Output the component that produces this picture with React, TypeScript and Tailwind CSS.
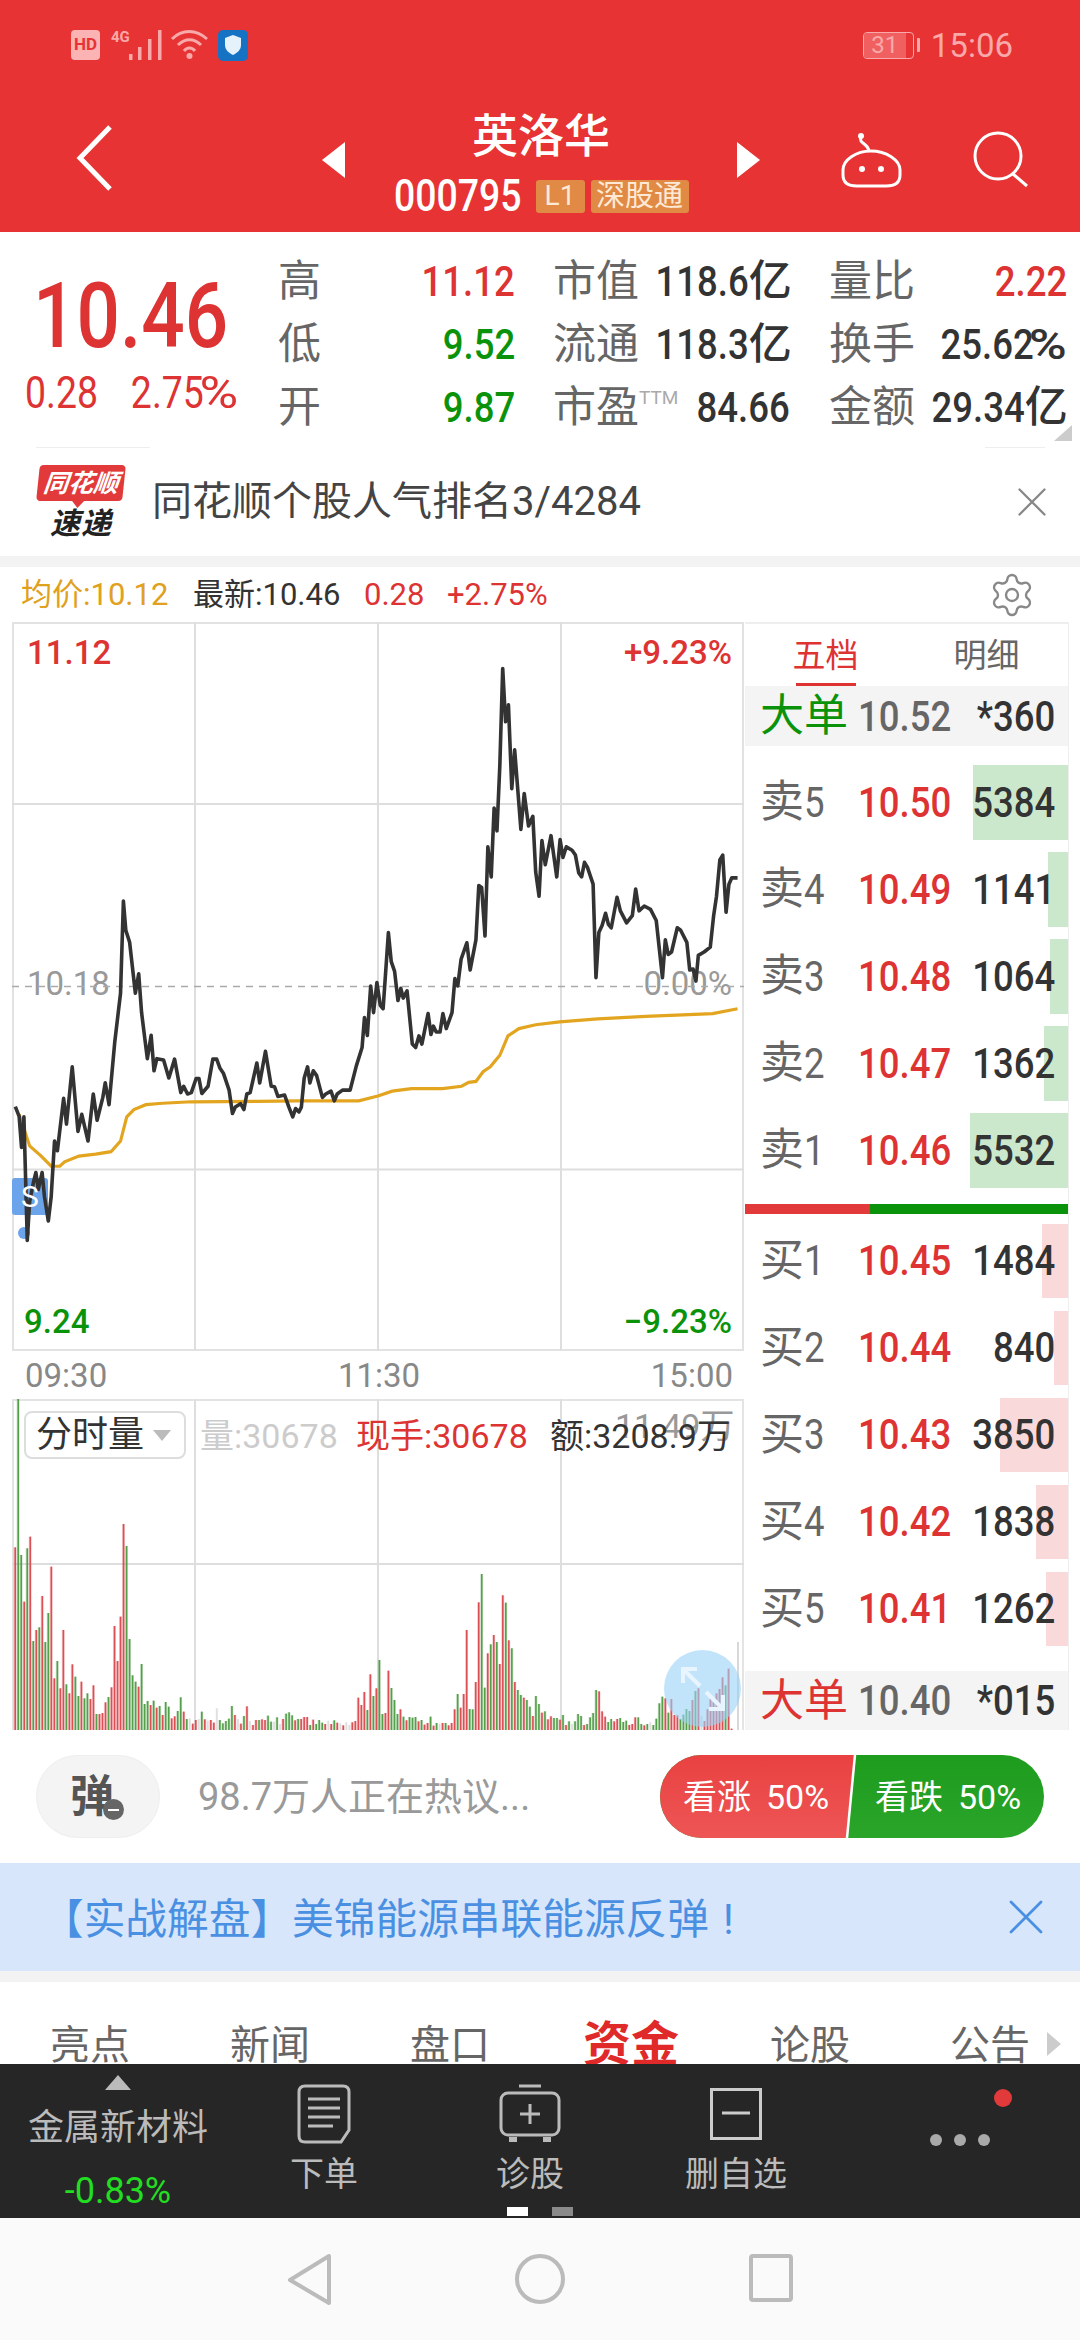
import { Settings, X } from 'lucide-react'

const RED = 'text-[#dd3333]'
const GREEN = 'text-[#0a930a]'

const PRICE_LINE =
  '32,1004 40,1024 45,1088 50,1025 57,1280 62,1200 70,1160 75,1140 80,1175 88,1140 93,1190 101,1240 107,1190 114,1075 120,1095 133,987 139,1040 151,922 163,1055 171,1020 184,1075 195,978 203,1032 215,985 220,955 228,1000 240,870 252,770 258,580 263,640 271,665 283,770 290,730 296,810 308,905 316,857 322,930 328,905 342,908 353,945 365,906 378,975 384,962 392,978 400,975 410,946 416,946 422,977 435,962 445,906 453,906 460,925 467,935 479,970 486,1018 492,1005 503,998 510,1010 516,978 523,975 537,914 543,955 555,890 567,962 574,963 581,983 595,980 604,1005 612,1025 618,1008 625,1015 630,1005 636,945 643,922 648,955 655,930 662,940 674,985 681,978 692,972 699,992 705,978 716,970 732,970 745,920 757,882 762,820 768,857 775,755 781,810 788,748 795,795 801,802 812,645 818,705 825,725 832,785 838,760 843,780 851,765 862,875 869,882 876,858 882,875 895,812 901,855 906,838 912,850 920,850 926,812 933,843 945,810 951,740 957,755 964,700 976,666 983,722 995,660 1001,548 1007,552 1014,652 1020,468 1027,530 1033,388 1039,435 1045,300 1051,100 1057,210 1063,175 1070,348 1076,268 1089,432 1096,358 1105,425 1114,405 1120,520 1127,570 1133,455 1140,505 1152,445 1164,530 1171,453 1177,490 1184,468 1196,475 1203,485 1210,522 1216,530 1222,500 1228,510 1240,545 1246,738 1252,645 1259,630 1266,605 1272,628 1278,635 1290,572 1297,600 1310,625 1322,610 1329,555 1336,600 1347,590 1360,597 1372,620 1385,738 1391,660 1397,690 1404,685 1416,635 1423,640 1436,665 1442,722 1449,720 1455,745 1460,692 1472,685 1485,675 1492,610 1498,570 1505,495 1511,485 1518,603 1524,545 1530,532 1542,532'

const AVG_LINE =
  '40,1020 62,1085 85,1105 107,1127 125,1127 135,1118 165,1106 200,1102 232,1097 252,1075 265,1025 280,1010 305,1000 340,997 400,994 540,993 620,992 750,992 790,982 820,972 860,967 925,967 965,962 980,954 995,952 1010,932 1025,922 1045,898 1062,858 1085,843 1120,835 1170,829 1250,823 1350,818 1490,812 1542,802'

// bar tops, read off the reference: colour letter + top in 3x crop units (baseline 600)
const VOLUME =
  'r52 g-393 g75 r215 g55 r20 g333 r300 g292 r198 g336 g249 r110 r445 g393 r475 r300 g463 r490 r403 g440 g498 r455 g505 g490 r507 r466 g552 r552 r549 r517 g501 r472 r288 r393 r260 r-18 g48 g327 g436 g455 r470 g402 g522 g513 r525 g512 r533 g528 r555 g516 g530 r565 r559 g543 g502 r545 g567 l565 r581 r570 l567 g545 r568 l572 r570 r578 l535 g570 g580 g573 g566 g528 r555 l567 r581 g558 r529 l573 r585 r570 g570 r568 r570 g557 g575 l575 g562 l582 r567 g551 g547 g556 r571 g567 r567 r561 r561 g585 r569 g582 g570 g578 r582 l572 r582 g571 r578 l580 r586 l577 l585 r577 r573 r503 r525 r486 g540 r433 g498 r475 g390 g552 r549 r422 g474 g510 g552 r538 g560 r571 g561 g563 g561 r574 g570 r584 r579 g560 r587 g579 l581 r579 g579 r586 r579 r538 g492 r533 r492 r300 g537 g538 r456 r217 g132 g473 r370 g343 r315 g336 r402 r196 g218 r331 g355 r456 g480 g495 r503 g510 g530 r558 g498 g522 r548 g544 r568 r559 g564 g564 r569 g555 r585 g574 l582 g574 g552 g558 r585 g582 g562 g549 g480 r484 r544 r560 g576 g567 r574 r567 g564 g576 g572 r585 r582 r562 g562 g582 r586 g582 l577 g585 g566 g520 g500 r505 g548 r507 r555 r556 g567 g554 g537 g543 r510 g483 r475 l558 r573 r538 r507 r515 r490 r477 r442 g466 r416 r596'

const BAR_FILL: Record<string, string> = { r: '#dc4f55', g: '#549f4a', l: '#dedede' }

const SELLS = [
  { n: 5, price: '10.50', vol: '5384', w: 95 },
  { n: 4, price: '10.49', vol: '1141', w: 20 },
  { n: 3, price: '10.48', vol: '1064', w: 18 },
  { n: 2, price: '10.47', vol: '1362', w: 24 },
  { n: 1, price: '10.46', vol: '5532', w: 98 },
]

const BUYS = [
  { n: 1, price: '10.45', vol: '1484', w: 26 },
  { n: 2, price: '10.44', vol: '840', w: 14 },
  { n: 3, price: '10.43', vol: '3850', w: 68 },
  { n: 4, price: '10.42', vol: '1838', w: 32 },
  { n: 5, price: '10.41', vol: '1262', w: 22 },
]

function NumL({ children, className = '' }: { children: React.ReactNode; className?: string }) {
  return <span className={`inline-block origin-left scale-x-[.85] ${className}`}>{children}</span>
}

function NumR({ children, className = '' }: { children: React.ReactNode; className?: string }) {
  return <span className={`inline-block origin-right scale-x-[.85] ${className}`}>{children}</span>
}

function Percent() {
  return <span className="ml-[2px] inline-block origin-right scale-x-[1.2]">%</span>
}

function StatusBar() {
  return (
    <div className="flex h-[90px] items-center justify-between pl-[71px] pr-[67px] text-[#f9a9a9]">
      <div className="flex items-center">
        <div className="flex h-[30px] w-[29px] items-center justify-center rounded-[4px] bg-[#fbb3b3] text-[17px] font-bold text-[#e73333]">
          HD
        </div>
        <svg width="54" height="32" viewBox="0 0 54 32" className="ml-[9px]">
          <text x="2" y="13" fontSize="15" fontWeight="700" fill="#f9a9a9">4G</text>
          <g fill="#f9a9a9">
            <rect x="20" y="25" width="3.5" height="6" />
            <rect x="29" y="18" width="3.5" height="13" />
            <rect x="39" y="10" width="3.5" height="21" />
            <rect x="49" y="1" width="3.5" height="30" />
          </g>
        </svg>
        <svg width="40" height="32" viewBox="0 0 40 32" className="ml-[7px]" fill="none" stroke="#f9a9a9" strokeWidth="3">
          <path d="M2 10 C12 0 26 0 37 10" />
          <path d="M8 16 C15 9 24 9 31 16" />
          <path d="M14 22 C17 18 22 18 25 22" />
          <circle cx="19.5" cy="27" r="3" fill="#f9a9a9" stroke="none" />
        </svg>
        <div className="ml-[8px] flex h-[31px] w-[30px] items-center justify-center rounded-[5px] bg-[#1673c4]">
          <svg width="18" height="22" viewBox="0 0 18 22">
            <path d="M9 1 L17 4 V11 C17 16 13 19 9 21 C5 19 1 16 1 11 V4 Z" fill="#e6f2fb" />
          </svg>
        </div>
      </div>
      <div className="flex items-center">
        <div className="flex h-[27px] w-[51px] items-center overflow-hidden rounded-[4px] border-[1.5px] border-[#f9a9a9] text-[24px] leading-none">
          <div className="flex h-full w-[42px] items-center justify-center bg-[#f06060]">31</div>
        </div>
        <div className="ml-[3px] h-[14px] w-[3px] rounded-r-[1px] bg-[#f9a9a9]" />
        <span className="ml-[11px] text-[33px] leading-none">15:06</span>
      </div>
    </div>
  )
}

function NavBar() {
  return (
    <div className="flex h-[142px] items-start text-white">
      <svg width="50" height="70" viewBox="0 0 50 70" className="ml-[70px] mt-[33px]" fill="none" stroke="#fff" strokeWidth="5">
        <path d="M40 4 L10 35 L40 66" />
      </svg>
      <svg width="24" height="36" viewBox="0 0 24 36" className="ml-[202px] mt-[52px]">
        <path d="M23 0 V36 L0 18 Z" fill="#fff" />
      </svg>
      <div className="flex w-[390px] flex-col items-center">
        <div className="mt-[22px] h-[48px] text-[46px] font-medium leading-[48px]">英洛华</div>
        <div className="mt-[19px] flex h-[34px] items-center">
          <NumL className="w-[142px] text-[44px] font-medium leading-none">000795</NumL>
          <span className="flex h-[33px] w-[49px] items-center justify-center rounded-[3px] bg-[#e08a45] text-[28px] leading-none text-[#fde9d6]">
            L1
          </span>
          <span className="ml-[6px] flex h-[33px] w-[98px] items-center justify-center rounded-[3px] bg-[#e08a45] text-[29px] leading-none text-[#fde9d6]">
            深股通
          </span>
        </div>
      </div>
      <svg width="24" height="36" viewBox="0 0 24 36" className="mt-[52px]">
        <path d="M1 0 V36 L24 18 Z" fill="#fff" />
      </svg>
      <svg width="64" height="58" viewBox="0 0 64 58" className="ml-[80px] mt-[42px]" fill="none" stroke="#fff" strokeWidth="3">
        <circle cx="21" cy="4" r="3" fill="#fff" stroke="none" />
        <path d="M21 5 C18 12 29 11 29 20" />
        <path d="M3 38 C3 28 16 19 31 19 C46 19 60 28 60 38 V43 C60 52 53 54 46 54 H17 C10 54 3 52 3 43 Z" />
        <circle cx="22" cy="37" r="3" fill="#fff" stroke="none" />
        <circle cx="41" cy="37" r="3" fill="#fff" stroke="none" />
      </svg>
      <svg width="60" height="60" viewBox="0 0 60 60" className="ml-[68px] mt-[41px]" fill="none" stroke="#fff" strokeWidth="3">
        <circle cx="26" cy="25" r="23" />
        <path d="M41 43 L55 55" />
      </svg>
    </div>
  )
}

function StatRow({ label, value }: { label: React.ReactNode; value: React.ReactNode }) {
  return (
    <div className="flex h-[63px] items-center justify-between">
      <span className="flex shrink-0 items-start whitespace-nowrap text-[43px] leading-none text-[#666]">{label}</span>
      <span className="flex items-center whitespace-nowrap text-[43px] font-medium leading-none text-[#333]">{value}</span>
    </div>
  )
}

function Stats() {
  return (
    <div className="relative flex h-[216px] bg-white">
      <div className="w-[278px] pl-[25px] pt-[49px]">
        <NumL className={`ml-[8px] block text-[90px] font-medium leading-[72px] ${RED}`}>10.46</NumL>
        <div className={`mt-[20px] flex w-[213px] items-center justify-between text-[44px] leading-[38px] ${RED}`}>
          <NumL>0.28</NumL>
          <span className="flex items-center">
            <NumR>2.75</NumR>
            <Percent />
          </span>
        </div>
      </div>
      <div className="w-[237px] pt-[18px]">
        <StatRow label="高" value={<NumR className={RED}>11.12</NumR>} />
        <StatRow label="低" value={<NumR className={GREEN}>9.52</NumR>} />
        <StatRow label="开" value={<NumR className={GREEN}>9.87</NumR>} />
      </div>
      <div className="ml-[38px] w-[237px] pt-[18px]">
        <StatRow
          label="市值"
          value={
            <>
              <NumR>118.6</NumR>亿
            </>
          }
        />
        <StatRow
          label="流通"
          value={
            <>
              <NumR>118.3</NumR>亿
            </>
          }
        />
        <StatRow
          label={
            <>
              市盈<span className="mt-[2px] text-[19px] leading-none text-[#aaa]">TTM</span>
            </>
          }
          value={<NumR>84.66</NumR>}
        />
      </div>
      <div className="ml-[39px] w-[238px] pt-[18px]">
        <StatRow label="量比" value={<NumR className={RED}>2.22</NumR>} />
        <StatRow
          label="换手"
          value={
            <>
              <NumR>25.62</NumR>
              <Percent />
            </>
          }
        />
        <StatRow
          label="金额"
          value={
            <>
              <NumR>29.34</NumR>亿
            </>
          }
        />
      </div>
      <svg width="18" height="16" viewBox="0 0 18 16" className="absolute right-[8px] top-[193px]">
        <path d="M18 0 V16 H0 Z" fill="#ccc" />
      </svg>
      <span className="absolute bottom-0 left-[36px] h-px w-[114px] bg-[#eee]" />
      <span className="absolute bottom-0 left-[985px] h-px w-[60px] bg-[#eee]" />
    </div>
  )
}

function SpeedLogo() {
  return (
    <div className="flex w-[90px] flex-col items-center">
      <div className="relative flex h-[36px] w-[86px] -skew-x-6 items-center justify-center rounded-[4px] bg-[#e23a3a]">
        <span className="text-[25px] font-bold italic leading-none text-white">同花顺</span>
        <span className="absolute bottom-[-7px] left-[36px] h-0 w-0 border-x-[6px] border-t-[7px] border-x-transparent border-t-[#e23a3a]" />
      </div>
      <span className="mt-[7px] text-[30px] font-bold italic leading-[32px] tracking-[1px] text-[#222]">速递</span>
    </div>
  )
}

function NewsBanner() {
  return (
    <div className="flex h-[108px] items-center bg-white pl-[36px] pr-[23px]">
      <SpeedLogo />
      <span className="ml-[26px] flex-1 text-[40px] leading-none text-[#444]">同花顺个股人气排名3/4284</span>
      <X size={50} strokeWidth={1.1} className="text-[#888]" />
    </div>
  )
}

function QuoteLine() {
  return (
    <div className="flex h-[55px] items-center bg-white pl-[21px] pr-[44px] text-[31px] leading-none">
      <span className="w-[172px] text-[#e0a020]">均价:10.12</span>
      <span className="w-[171px] text-[#333]">最新:10.46</span>
      <span className={`w-[83px] ${RED}`}>0.28</span>
      <span className={`flex-1 ${RED}`}>+2.75%</span>
      <Settings size={48} strokeWidth={1.2} className="text-[#888]" />
    </div>
  )
}

function PriceChart() {
  return (
    <div className="relative h-[729px] w-[732px] text-[33px] leading-none">
      <svg width="732" height="729" viewBox="12 622 732 729" className="absolute inset-0" fill="none">
        <rect x="13" y="623" width="730" height="727" stroke="#e2e2e2" strokeWidth="2" />
        <g stroke="#dedede" strokeWidth="2">
          <path d="M195 622 V1351 M378 622 V1351 M561 622 V1351 M12 804 H744 M12 1169.5 H744" />
        </g>
      </svg>
      <span className="absolute left-[15px] top-[14px] font-medium text-[#dd3333]">11.12</span>
      <span className="absolute right-[12px] top-[14px] font-medium text-[#dd3333]">+9.23%</span>
      <span className="absolute left-[15px] top-[345px] text-[#999]">10.18</span>
      <span className="absolute right-[12px] top-[345px] text-[#999]">0.00%</span>
      <span className="absolute left-[12px] top-[683px] font-medium text-[#0a930a]">9.24</span>
      <span className="absolute right-[12px] top-[683px] font-medium text-[#0a930a]">−9.23%</span>
      <div className="absolute left-0 top-[556px] h-[37px] w-[36px] rounded-[3px] bg-[#6ba4ea]" />
      <div className="absolute left-[6px] top-[605px] h-[12px] w-[12px] rounded-full bg-[#6ba4ea]" />
      <svg width="732" height="729" viewBox="12 622 732 729" className="absolute inset-0" fill="none">
        <path d="M12 986.5 H744" stroke="#aaa" strokeWidth="1.5" strokeDasharray="7 6" />
        <g transform={`translate(0 620) scale(${1 / 2.0907} ${1 / 2.0632})`}>
          <polyline points={AVG_LINE} stroke="#e3a51f" strokeWidth="3.2" vectorEffect="non-scaling-stroke" />
          <polyline points={PRICE_LINE} stroke="#333" strokeWidth="3.6" strokeLinejoin="round" vectorEffect="non-scaling-stroke" />
        </g>
      </svg>
      <span className="absolute left-[9px] top-[560px] text-[30px] leading-[30px] text-white">S</span>
    </div>
  )
}

function VolumeChart() {
  const bars = VOLUME.split(' ').map((item, i) => ({
    color: BAR_FILL[item[0]],
    x: 14.4 + 3.01 * i,
    top: 1530 + Number(item.slice(1)) / 3,
  }))
  return (
    <div className="relative h-[331px] w-[732px]">
      <svg width="732" height="331" viewBox="12 1399 732 331" className="absolute inset-0" fill="none">
        <path d="M13 1730 V1400 H743 V1730" stroke="#e4e4e4" strokeWidth="2" />
        <path d="M195 1399 V1730 M378 1399 V1730 M561 1399 V1730 M12 1564 H744" stroke="#dedede" strokeWidth="2" />
        <path d="M738 1642 V1730" stroke="#d8d8d8" strokeWidth="2" />
        {bars.map((bar, i) => (
          <g key={i} fill={bar.color}>
            <rect x={bar.x - 0.8} y={bar.top} width="3" height={1730 - bar.top} opacity="0.25" />
            <rect x={bar.x} y={bar.top} width="1.6" height={1730 - bar.top} />
          </g>
        ))}
      </svg>
      <span className="absolute left-[603px] top-[10px] text-[34px] leading-none text-[#999]">11.49万</span>
      <div className="absolute left-[12px] top-[12px] flex h-[48px] w-[162px] items-center rounded-[8px] border-2 border-[#ddd] bg-white pl-[10px]">
        <span className="text-[36px] leading-none text-[#333]">分时量</span>
        <span className="ml-[9px] h-0 w-0 border-x-[9px] border-t-[11px] border-x-transparent border-t-[#bbb]" />
      </div>
      <div className="absolute left-[188px] top-[20px] flex text-[34px] leading-none">
        <span className="w-[156px] text-[#ccc]">量:30678</span>
        <span className="w-[194px] text-[#dd3333]">现手:30678</span>
        <span className="text-[#333]">额:3208.9万</span>
      </div>
      <div className="absolute left-[652px] top-[251px] flex h-[77px] w-[77px] items-center justify-center rounded-full bg-[#9ad2f8]/60">
        <svg width="52" height="52" viewBox="0 0 52 52" fill="none" stroke="#e9f5fe" strokeWidth="4">
          <path d="M6 20 V6 H20 M6 6 L23 23" />
          <path d="M46 32 V46 H32 M46 46 L29 29" />
        </svg>
      </div>
    </div>
  )
}

function BookRow({ label, price, vol, w, tone }: { label: string; price: string; vol: string; w: number; tone: string }) {
  return (
    <div className="relative flex h-[74.5px] items-center pl-[15px] leading-none">
      <div className={`absolute bottom-0 right-0 top-0 ${tone}`} style={{ width: w }} />
      <span className="relative flex w-[98px] items-center text-[44px] text-[#666]">
        {label[0]}
        <NumL className="text-[43px]">{label[1]}</NumL>
      </span>
      <NumL className={`relative w-[95px] text-[43px] font-medium ${RED}`}>{price}</NumL>
      <NumR className="relative flex-1 pr-[15px] text-right text-[43px] font-medium text-[#333]">{vol}</NumR>
    </div>
  )
}

function BigOrderRow({ label, labelColor, price, vol, height }: { label: string; labelColor: string; price: string; vol: string; height: string }) {
  return (
    <div className={`flex items-center bg-[#f4f4f4] pl-[15px] leading-none ${height}`}>
      <span className={`w-[98px] text-[44px] ${labelColor}`}>{label}</span>
      <NumL className="w-[95px] text-[43px] font-medium text-[#666]">{price}</NumL>
      <NumR className="flex-1 pr-[15px] text-right text-[43px] font-medium text-[#333]">{vol}</NumR>
    </div>
  )
}

function OrderBook() {
  return (
    <div className="flex h-[1108px] w-[324px] flex-col border-r border-t-2 border-[#eee] bg-white">
      <div className="flex h-[62px] text-[33px] leading-none">
        <div className="flex w-[161px] flex-col items-center">
          <span className={`mt-[15px] ${RED}`}>五档</span>
          <span className="mt-[11px] h-[5px] w-[60px] bg-[#dd3333]" />
        </div>
        <div className="flex w-[161px] justify-center pt-[15px] text-[#666]">明细</div>
      </div>
      <BigOrderRow label="大单" labelColor={GREEN} price="10.52" vol="*360" height="h-[60px]" />
      <div className="flex flex-col gap-[12.5px] pt-[19px]">
        {SELLS.map((row) => (
          <BookRow key={row.n} label={`卖${row.n}`} price={row.price} vol={row.vol} w={row.w} tone="bg-[#cce8cc]" />
        ))}
      </div>
      <div className="mt-[16px] flex h-[10px] shrink-0">
        <div className="w-[125px] bg-[#e23a3a]" />
        <div className="flex-1 bg-[#0a930a]" />
      </div>
      <div className="flex flex-col gap-[12.5px] pt-[10px]">
        {BUYS.map((row) => (
          <BookRow key={row.n} label={`买${row.n}`} price={row.price} vol={row.vol} w={row.w} tone="bg-[#f9d9da]" />
        ))}
      </div>
      <div className="mt-[25px]">
        <BigOrderRow label="大单" labelColor={RED} price="10.40" vol="*015" height="h-[59px]" />
      </div>
    </div>
  )
}

function ActionRow() {
  return (
    <div className="flex h-[133px] items-center bg-white pl-[36px] pr-[36px]">
      <div className="relative flex h-[83px] w-[124px] items-center justify-center rounded-[42px] border border-[#eee] bg-[#f4f4f4]">
        <span className="mr-[12px] text-[44px] font-bold leading-none text-[#555]">弹</span>
        <span className="absolute left-[66px] top-[43px] flex h-[21px] w-[21px] items-center justify-center rounded-full bg-[#666]">
          <span className="h-[2px] w-[11px] bg-white" />
        </span>
      </div>
      <span className="ml-[38px] flex-1 text-[38px] leading-none text-[#999]">98.7万人正在热议...</span>
      <div className="relative flex h-[83px] w-[384px] overflow-hidden rounded-[42px] bg-gradient-to-b from-[#1d9c1d] to-[#2aa52a] text-[34px] leading-none text-white">
        <div className="flex w-[195px] items-center bg-gradient-to-b from-[#e94141] to-[#ee5555] pl-[23px] [clip-path:polygon(0_0,100%_0,196px_0,187px_100%,0_100%)]">
          看涨<span className="ml-[15px]">50%</span>
        </div>
        <div className="flex flex-1 items-center pl-[20px]">
          看跌<span className="ml-[15px]">50%</span>
        </div>
        <svg width="14" height="83" viewBox="0 0 14 83" className="absolute left-[184px] top-0">
          <path d="M11 0 L3 83" stroke="#fff" strokeWidth="2.5" />
        </svg>
      </div>
    </div>
  )
}

function BlueBanner() {
  return (
    <div className="flex h-[108px] items-center bg-[#d7e6fa] pl-[42px] pr-[24px] text-[#4a90e2]">
      <span className="flex-1 pt-[5px] text-[41.7px] leading-none">
        【实战解盘】美锦能源串联能源反弹<span className="ml-[14px]">!</span>
      </span>
      <X size={60} strokeWidth={1.1} />
    </div>
  )
}

function TabsRow() {
  const tabs = ['亮点', '新闻', '盘口', '资金', '论股', '公告']
  return (
    <div className="relative h-[82px] overflow-hidden bg-white pl-[50px] pt-[44px]">
      <div className="flex items-start">
        {tabs.map((tab) => (
          <span
            key={tab}
            className={
              tab === '资金'
                ? 'ml-[-7px] mt-[-5px] w-[187px] shrink-0 whitespace-nowrap text-[48px] font-bold leading-none text-[#e02a2a]'
                : 'w-[180px] shrink-0 whitespace-nowrap text-[40px] leading-none text-[#666]'
            }
          >
            {tab}
          </span>
        ))}
      </div>
      <svg width="14" height="24" viewBox="0 0 14 24" className="absolute right-[19px] top-[50px]">
        <path d="M0 0 L14 12 L0 24 Z" fill="#ccc" />
      </svg>
    </div>
  )
}

function Toolbar() {
  return (
    <div className="relative flex h-[154px] bg-[#262626] text-[#bbb]">
      <div className="flex w-[236px] flex-col items-center">
        <span className="mt-[11px] h-0 w-0 border-x-[13px] border-b-[15px] border-x-transparent border-b-[#bbb]" />
        <span className="mt-[20px] text-[36px] leading-none">金属新材料</span>
        <span className="mt-[27px] text-[36px] leading-none text-[#22dd22]">-0.83%</span>
      </div>
      <div className="ml-[20px] flex w-[136px] flex-col items-center">
        <svg width="54" height="60" viewBox="0 0 54 60" className="mt-[20px]" fill="none" stroke="#bbb" strokeWidth="3">
          <path d="M8 2 H46 Q52 2 52 8 V46 L44 58 H8 Q2 58 2 52 V8 Q2 2 8 2 Z" />
          <path d="M11 15 H43 M11 24 H43 M11 33 H43 M11 42 H36" />
        </svg>
        <span className="mt-[13px] text-[34px] leading-none">下单</span>
      </div>
      <div className="ml-[70px] flex w-[136px] flex-col items-center">
        <svg width="62" height="60" viewBox="0 0 62 60" className="mt-[20px]" fill="none" stroke="#bbb" strokeWidth="3">
          <path d="M20 2 H42" />
          <rect x="2" y="9" width="58" height="42" rx="7" />
          <path d="M31 20 V40 M21 30 H41" />
          <path d="M10 53 V58 H18 V53 M44 53 V58 H52 V53" fill="#bbb" stroke="none" />
        </svg>
        <span className="mt-[13px] text-[34px] leading-none">诊股</span>
      </div>
      <div className="ml-[70px] flex w-[136px] flex-col items-center">
        <svg width="52" height="52" viewBox="0 0 52 52" className="mt-[24px]" fill="none" stroke="#ccc" strokeWidth="3">
          <rect x="1.5" y="1.5" width="49" height="49" />
          <path d="M12 25 H40" />
        </svg>
        <span className="mt-[17px] text-[34px] leading-none">删自选</span>
      </div>
      <svg width="90" height="70" viewBox="0 0 90 70" className="ml-[123px] mt-[22px] shrink-0">
        <circle cx="9" cy="54" r="6" fill="#aaa" />
        <circle cx="33" cy="54" r="6" fill="#aaa" />
        <circle cx="57" cy="54" r="6" fill="#aaa" />
        <circle cx="76" cy="12" r="9" fill="#e23a3a" />
      </svg>
      <div className="absolute bottom-[2px] left-[507px] flex gap-[24px]">
        <span className="h-[9px] w-[21px] bg-white" />
        <span className="h-[9px] w-[21px] bg-[#8a8a8a]" />
      </div>
    </div>
  )
}

function SystemNav() {
  return (
    <div className="flex h-[122px] items-start bg-[#fafafa] pl-[286px] pt-[35px]">
      <svg width="46" height="54" viewBox="0 0 46 54" fill="none" stroke="#bbb" strokeWidth="4" strokeLinejoin="round">
        <path d="M43 3 V50 L4 27 Z" />
      </svg>
      <svg width="52" height="52" viewBox="0 0 52 52" className="ml-[182px]" fill="none" stroke="#bbb" strokeWidth="4">
        <circle cx="26" cy="26" r="23" />
      </svg>
      <svg width="46" height="50" viewBox="0 0 46 50" className="ml-[182px]" fill="none" stroke="#bbb" strokeWidth="4">
        <rect x="3" y="3" width="40" height="44" rx="2" />
      </svg>
    </div>
  )
}

export default function App() {
  return (
    <div className="h-[2340px] w-[1080px] overflow-hidden bg-white font-[Roboto,'Noto_Sans_CJK_SC',sans-serif]">
      <header className="h-[232px] bg-[#e73333]">
        <StatusBar />
        <NavBar />
      </header>
      <Stats />
      <NewsBanner />
      <div className="h-[11px] bg-[#f3f3f3]" />
      <QuoteLine />
      <div className="flex">
        <div className="w-[745px] shrink-0 pl-[12px]">
          <PriceChart />
          <div className="flex h-[48px] items-center justify-between pl-[13px] pr-[12px] text-[33px] leading-none text-[#888]">
            <span>09:30</span>
            <span>11:30</span>
            <span>15:00</span>
          </div>
          <VolumeChart />
        </div>
        <OrderBook />
      </div>
      <ActionRow />
      <BlueBanner />
      <div className="h-[11px] bg-[#f3f3f3]" />
      <TabsRow />
      <Toolbar />
      <SystemNav />
    </div>
  )
}
